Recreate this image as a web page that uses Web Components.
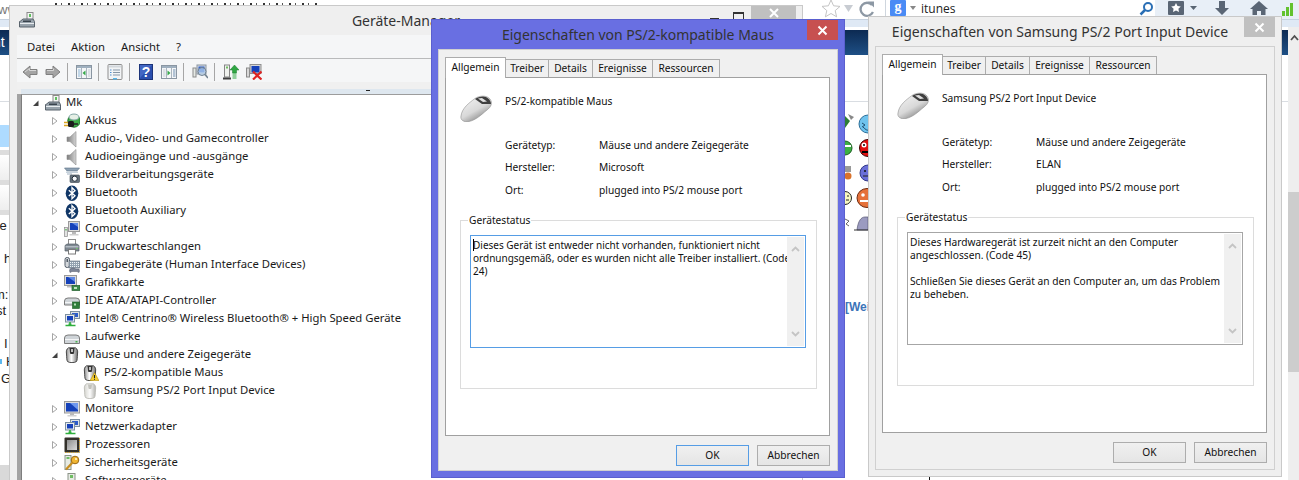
<!DOCTYPE html>
<html>
<head>
<meta charset="utf-8">
<title>Geräte-Manager</title>
<style>
  html, body { margin: 0; height: 100%; background: #fff; overflow: hidden; }
  body { position: relative; width: 1299px; height: 480px; font-family: "Noto Sans", "Liberation Sans", sans-serif; color: #111; }
</style>
</head>
<body>
<browser-behind></browser-behind>

<device-manager>
  <tree-row level="0" state="open" icon="mk">Mk</tree-row>
  <tree-row level="1" state="closed" icon="battery">Akkus</tree-row>
  <tree-row level="1" state="closed" icon="speaker">Audio-, Video- und Gamecontroller</tree-row>
  <tree-row level="1" state="closed" icon="speaker">Audioeingänge und -ausgänge</tree-row>
  <tree-row level="1" state="closed" icon="camera">Bildverarbeitungsgeräte</tree-row>
  <tree-row level="1" state="closed" icon="bt">Bluetooth</tree-row>
  <tree-row level="1" state="closed" icon="bt">Bluetooth Auxiliary</tree-row>
  <tree-row level="1" state="closed" icon="computer">Computer</tree-row>
  <tree-row level="1" state="closed" icon="printer">Druckwarteschlangen</tree-row>
  <tree-row level="1" state="closed" icon="hid">Eingabegeräte (Human Interface Devices)</tree-row>
  <tree-row level="1" state="closed" icon="gpu">Grafikkarte</tree-row>
  <tree-row level="1" state="closed" icon="ide">IDE ATA/ATAPI-Controller</tree-row>
  <tree-row level="1" state="closed" icon="net">Intel® Centrino® Wireless Bluetooth® + High Speed Geräte</tree-row>
  <tree-row level="1" state="closed" icon="drive">Laufwerke</tree-row>
  <tree-row level="1" state="open" icon="mouse">Mäuse und andere Zeigegeräte</tree-row>
  <tree-row level="2" icon="mousewarn">PS/2-kompatible Maus</tree-row>
  <tree-row level="2" icon="mouselight">Samsung PS/2 Port Input Device</tree-row>
  <tree-row level="1" state="closed" icon="monitor">Monitore</tree-row>
  <tree-row level="1" state="closed" icon="net">Netzwerkadapter</tree-row>
  <tree-row level="1" state="closed" icon="cpu">Prozessoren</tree-row>
  <tree-row level="1" state="closed" icon="key">Sicherheitsgeräte</tree-row>
  <tree-row level="1" state="closed" icon="software">Softwaregeräte</tree-row>
</device-manager>

<prop-dialog style="left:431px;top:19px;height:459px;--status-size:10px" active heading="Eigenschaften von PS/2-kompatible Maus"
  device="PS/2-kompatible Maus" maker="Microsoft">Dieses Gerät ist entweder nicht vorhanden, funktioniert nicht<br>ordnungsgemäß, oder es wurden nicht alle Treiber installiert. (Code<br>24)</prop-dialog>

<prop-dialog style="left:868px;top:16px;height:461px;--title-pad:30px" heading="Eigenschaften von Samsung PS/2 Port Input Device"
  device="Samsung PS/2 Port Input Device" maker="ELAN">Dieses Hardwaregerät ist zurzeit nicht an den Computer<br>angeschlossen. (Code 45)<br><br>Schließen Sie dieses Gerät an den Computer an, um das Problem<br>zu beheben.</prop-dialog>

<script>
  const UI_FONT = '"Noto Sans", "Liberation Sans", sans-serif';

  const ICONS = {
    mk: `<rect x="8" y=".5" width="6" height="8" fill="#f4f4f4" stroke="#8a8a8a"/><rect x="10" y="2" width="2" height="3" fill="#5fbf5f"/><path d="M1 9.5 4 7h10l1.500 2.500V15H.5V9.500z" fill="#98a3ac" stroke="#59636c"/><rect x="1" y="11" width="14" height="1" fill="#e8ecef"/><rect x="4" y="8.500" width="8" height="1.500" fill="#39434c"/>`,
    battery: `<circle cx="10" cy="8" r="6.200" fill="#3fae49" stroke="#1f6f2a"/><ellipse cx="10" cy="4" rx="5" ry="3" fill="#e6efe6" stroke="#8aa"/><rect x="4" y="8" width="6" height="6" rx="1.500" fill="#1d1d1d"/><path d="M0 9.500h4M0 12.500h4" stroke="#d9a520" stroke-width="1.300"/><path d="M10 11h4" stroke="#222" stroke-width="1.500"/>`,
    speaker: `<defs><linearGradient id="g"><stop offset="0" stop-color="#7d7d7d"/><stop offset="1" stop-color="#d4d4d4"/></linearGradient></defs><path d="M3 6h3l6-5.500V16L6 10.500H3z" fill="url(#g)" stroke="#8f8f8f" stroke-width=".6"/>`,
    camera: `<path d="M.5 1h15L13 4H3z" fill="#8ea2b4" stroke="#5c7084" stroke-width=".6"/><rect x="2" y="4.500" width="12" height="1.500" fill="#c6d2dc"/><rect x="3" y="6.500" width="5" height="1" fill="#9fb0bf"/><rect x="6" y="8" width="9.500" height="7.500" rx="1" fill="#66727e" stroke="#39434c" stroke-width=".6"/><circle cx="10.700" cy="11.700" r="2.600" fill="#f4f7fa" stroke="#222c36"/>`,
    bt: `<ellipse cx="8" cy="8.200" rx="6.300" ry="7.800" fill="#113767"/><path d="M4.800 5.300 11 10.800 8 13.800V2.600l3 3-6.200 5.500" fill="none" stroke="#fff" stroke-width="1.300"/>`,
    computer: `<rect x=".5" y="6.500" width="3" height="9" fill="#e2e2e2" stroke="#8a8a8a" stroke-width=".7"/><rect x="1.300" y="8" width="1.400" height="1.500" fill="#57b957"/><rect x="4.500" y=".5" width="11" height="10" fill="#dcdcdc" stroke="#9a9a9a"/><rect x="6" y="2" width="8" height="7" fill="#1541b9"/><path d="M8 2h6v4z" fill="#5e88e4"/><rect x="8" y="11" width="4" height="2" fill="#b9b9b9"/><rect x="5.500" y="13" width="9" height="1.500" fill="#cfcfcf"/>`,
    printer: `<rect x="4.500" y=".5" width="7" height="5" fill="#fff" stroke="#8b8b8b"/><path d="M1 6.500 3 5h10l2 1.500V12H1z" fill="#7e8891" stroke="#59636c" stroke-width=".7"/><rect x="1.500" y="7" width="13" height="1.500" fill="#b4bcc4"/><rect x="4.500" y="10.500" width="7" height="4.500" fill="#fff" stroke="#7a7a7a"/><rect x="12" y="9" width="1.500" height="1" fill="#6fcf5f"/>`,
    hid: `<rect x="1" y=".5" width="4.500" height="10" rx="2" fill="#d4d8dc" stroke="#535d68"/><rect x="2.500" y="2" width="1.500" height="3" fill="#535d68"/><rect x="5" y="4" width="11" height="7" fill="#93a2b0" stroke="#65717d" stroke-width=".6"/><path d="M6 5.500h9M6 7.500h9M6 9.500h9" stroke="#eef2f5" stroke-dasharray="1 1"/><path d="M6 12q3-2 6 0l3 0q1 2 0 3.500l-2-1H8l-2 1q-1-2 0-3.500z" fill="#7d8596" stroke="#525a6a" stroke-width=".5"/>`,
    gpu: `<rect x=".5" y=".5" width="12" height="10" fill="#dcdcdc" stroke="#9a9a9a"/><rect x="2" y="2" width="9" height="7" fill="#1541b9"/><path d="M4 2h7v5z" fill="#5e88e4"/><rect x="3" y="11" width="7" height="1.500" fill="#bdbdbd"/><rect x="8" y="10.500" width="8" height="5" fill="#3c8b4a" stroke="#1e5c2a" stroke-width=".7"/><rect x="10" y="12" width="3" height="2" fill="#bfe3c0"/>`,
    ide: `<path d="M.5 8q0-3 3.500-3h8q3.500 0 3.500 3v4H.5z" fill="#cfd4d8" stroke="#7b7b7b"/><rect x="1" y="9" width="14" height="1" fill="#f4f5f6"/><rect x="8.500" y="9" width="7" height="6.500" fill="#2f7d3a" stroke="#1c5a26" stroke-width=".6"/><rect x="10" y="10.500" width="2" height="2" fill="#b7e0b9"/>`,
    net: `<rect x="6.500" y=".5" width="9" height="7" fill="#dde2e6" stroke="#7d8f9f"/><rect x="8" y="2" width="6" height="4" fill="#2b5bc8"/><rect x="1.500" y="3.500" width="9" height="7.500" fill="#e6eaee" stroke="#7d8f9f"/><rect x="3" y="5" width="6" height="4.500" fill="#1541b9"/><path d="M6 11v3M1.500 14.500h10" stroke="#2fae3c" stroke-width="1.600"/><rect x="4.500" y="12.500" width="3" height="1.500" fill="#2fae3c"/>`,
    drive: `<path d="M.5 9q0-3 3.500-3h8q3.500 0 3.500 3v5.500H.5z" fill="#cfd4d8" stroke="#7b7b7b"/><rect x="1" y="10" width="14" height="1" fill="#f5f6f7"/><rect x="11.500" y="12" width="2" height="1.500" fill="#46b04c"/>`,
    mouse: `<defs><linearGradient id="g"><stop offset="0" stop-color="#8f8f8f"/><stop offset=".45" stop-color="#fff"/><stop offset="1" stop-color="#6f6f6f"/></linearGradient></defs><path d="M4.500.8C2.500 2 2 4 2.500 7 2.800 10 2.500 13 3.500 14.500 5 16 11 16 12.500 14.500 13.500 13 13.200 10 13.500 7 14 4 13.500 2 11.500.8z" fill="url(#g)" stroke="#3a3a3a" stroke-width=".9"/><path d="M5.500 1h5l-.5 5.500q-2 1.200-4 0z" fill="#333"/><rect x="7.200" y="2" width="1.600" height="3" fill="#e4e4e4"/>`,
    mousewarn: `<defs><linearGradient id="g"><stop offset="0" stop-color="#8f8f8f"/><stop offset=".45" stop-color="#fff"/><stop offset="1" stop-color="#6f6f6f"/></linearGradient></defs><path d="M3.500.8C1.500 2 1 4 1.500 7 1.800 10 1.500 13 2.500 14.500 4 16 10 16 11.500 14.500 12.500 13 12.200 10 12.500 7 13 4 12.500 2 10.500.8z" fill="url(#g)" stroke="#3a3a3a" stroke-width=".9"/><path d="M4.500 1h5L9 6.500q-2 1.200-4 0z" fill="#333"/><rect x="6.200" y="2" width="1.600" height="3" fill="#e4e4e4"/><path d="M11.500 7.500 16 15.800H7z" fill="#f7cf2e" stroke="#a8891a" stroke-width=".6"/><path d="M11.500 10v3M11.500 13.800v1" stroke="#222" stroke-width="1.100"/>`,
    mouselight: `<defs><linearGradient id="g"><stop offset="0" stop-color="#d6d6d0"/><stop offset=".5" stop-color="#fbfbfb"/><stop offset="1" stop-color="#b2b2ae"/></linearGradient></defs><path d="M3.500.8C1.500 2 1 4 1.500 7 1.800 10 1.500 13 2.500 14.500 4 16 10 16 11.500 14.500 12.500 13 12.200 10 12.500 7 13 4 12.500 2 10.500.8z" fill="url(#g)" stroke="#b5b5ae" stroke-width=".8"/><path d="M5 1.500h4l-.5 4q-1.500 1-3 0z" fill="#c2c2bc"/>`,
    monitor: `<rect x=".5" y=".5" width="15" height="11.500" fill="#dcdcdc" stroke="#9a9a9a"/><rect x="2" y="2" width="12" height="8.500" fill="#1541b9"/><path d="M6 2h8v7z" fill="#6f98ee"/><rect x="6" y="12" width="4" height="2" fill="#b9b9b9"/><rect x="3.500" y="14" width="9" height="1.500" fill="#d2d2d2"/>`,
    cpu: `<rect x=".5" y=".5" width="15" height="15" rx="1" fill="#33302a"/><path d="M1 15.500h14.500V1" fill="none" stroke="#d3a12c" stroke-dasharray="1 1"/><defs><linearGradient id="g" x1="0" y1="0" x2="1" y2="1"><stop offset="0" stop-color="#8d8d8d"/><stop offset="1" stop-color="#dcdcdc"/></linearGradient></defs><rect x="3" y="3" width="10" height="10" fill="url(#g)"/>`,
    key: `<rect x="1" y=".5" width="6" height="14" fill="#e7ebe4" stroke="#8c9488"/><rect x="2.500" y="2" width="3" height="2" fill="#6fbd63"/><circle cx="11" cy="5" r="3.800" fill="#f0b531" stroke="#96681a"/><circle cx="12" cy="4" r="1.100" fill="#fff4cf"/><path d="M8.500 7.500 2 14.500" stroke="#c78e22" stroke-width="2.200"/>`,
    software: `<rect x="4" y=".5" width="7" height="14" fill="#e7ebe4" stroke="#8c9488"/><rect x="6" y="2" width="3" height="3" fill="#6fbd63"/>`,
    back: `<path d="M1 8 8 2v3.500h7v5H8V14z" fill="#a4a4a4" stroke="#7f7f7f"/><path d="M3 8 7.500 4.500v2h6.500" fill="none" stroke="#d6d6d6"/>`,
    forward: `<path d="M15 8 8 2v3.500H1v5h7V14z" fill="#a4a4a4" stroke="#7f7f7f"/><path d="M2 6.500h6.500v-2" fill="none" stroke="#d6d6d6"/>`,
    tree: `<rect x=".5" y="1.500" width="15" height="13" fill="#f4f6f8" stroke="#8a96a2"/><rect x="1" y="2" width="14" height="2" fill="#9fb0bf"/><path d="M5.500 4v10M10.500 4v10" stroke="#aab4be"/><path d="M2 6h2.500M2 8h2.500M2 10h2.500M2 12h2.500" stroke="#8fb8d8"/><path d="M9.500 6.500v5L6.500 9z" fill="#35a84a"/><path d="M12 6h2.500M12 8h2.500M12 10h2.500M12 12h2.500" stroke="#c3ccd4"/>`,
    props: `<rect x="1" y=".5" width="14" height="15" rx="1" fill="#f2f4f6" stroke="#8e8e8e"/><rect x="2" y="1.500" width="12" height="2" fill="#d2d7dc"/><path d="M6 6h7M6 8.500h7M6 11h7" stroke="#8696a6"/><path d="M3 6h1.500M3 8.500h1.500M3 11h1.500" stroke="#4f8fcf"/><rect x="6" y="14" width="4" height="1.500" fill="#55b4e8"/>`,
    help: `<rect x="1.500" y=".5" width="13" height="15" fill="#2a4fae" stroke="#1c347a"/><path d="M2 1h12L2 14z" fill="#5b7fd8" opacity=".5"/><text x="8" y="13" text-anchor="middle" font-family="Liberation Sans" font-weight="700" font-size="14" fill="#fff">?</text>`,
    action: `<rect x=".5" y="1.500" width="15" height="13" fill="#f4f6f8" stroke="#8a96a2"/><rect x="1" y="2" width="14" height="2" fill="#9fb0bf"/><path d="M5.500 4v10M10.500 4v10" stroke="#aab4be"/><path d="M6.500 6.500v5L9.500 9z" fill="#35a84a"/><path d="M2 6h2.500M2 8h2.500M2 10h2.500M2 12h2.500" stroke="#c3ccd4"/><path d="M12 6h2.500M12 8h2.500M12 10h2.500M12 12h2.500" stroke="#6e8fb0"/>`,
    scan: `<rect x="1" y="4" width="3" height="9" fill="#e4e8e4" stroke="#8a8a8a"/><rect x="5" y="1" width="9" height="9" fill="#d6dde4" stroke="#8a94a0"/><rect x="6.500" y="2.500" width="6" height="6" fill="#2a5cc8"/><circle cx="10" cy="7.500" r="4" fill="#bcd6ee" fill-opacity=".7" stroke="#6f8192"/><path d="M13 10.500 16 14" stroke="#70808e" stroke-width="1.600"/>`,
    update: `<rect x="1.500" y="1" width="5" height="12" fill="#f0f2ee" stroke="#858585"/><rect x="3" y="2.500" width="2" height="2" fill="#6fbd63"/><rect x="0" y="13.500" width="8" height="2" fill="#3f3f3f"/><path d="M11.500 1 16 6h-2.500v3h-4V6H7z" fill="#2fa743" stroke="#1d7a2e" stroke-width=".5"/><path d="M9.500 10h4M9.500 12h4M9.500 14h4" stroke="#2fa743" stroke-width="1.200"/>`,
    disable: `<rect x=".5" y="4" width="3" height="9" fill="#d8d8d8" stroke="#8a8a8a"/><rect x="4" y=".5" width="11" height="9" fill="#d6d6d6" stroke="#8f8f8f"/><rect x="5.500" y="2" width="8" height="6.500" fill="#1541b9"/><path d="M7 7.500 15.500 15.500M15.500 7.500 7 15.500" stroke="#de2323" stroke-width="2.200"/>`
  };

  class DevIcon extends HTMLElement {
    connectedCallback() {
      const size = this.getAttribute('size') || 16;
      this.attachShadow({ mode: 'open' }).innerHTML = `
        <style>:host { display: block; width: ${size}px; height: ${size}px; flex: none; } svg { display: block; }</style>
        <svg width="${size}" height="${size}" viewBox="0 0 16 16">${ICONS[this.getAttribute('name')] || ''}</svg>`;
    }
  }
  customElements.define('dev-icon', DevIcon);

  // everything of the browser that peeks out behind the three windows
  class BrowserBehind extends HTMLElement {
    constructor() {
      super();
      this.attachShadow({ mode: 'open' }).innerHTML = `
      <style>
        :host { position: absolute; inset: 0; display: flex; flex-direction: column; background: #fff; overflow: hidden; }
        .tools { height: 19px; display: flex; background: #fff; flex: none; }
        .strip { height: 7px; flex: none; background: #dfe9f5; border-top: 1px solid #c6d2e0; }
        .navy { height: 25px; flex: none; margin-top: 3px; background: linear-gradient(#0c2a52, #1e4f85); }
        .rule { height: 1px; flex: none; margin-top: 46px; background: #d9dde2; }
        .bit { position: absolute; }
        .txt { position: absolute; font: 13px/15px "Liberation Sans", sans-serif; color: #222; white-space: nowrap; }
        .scroll { position: absolute; left: 1288px; top: 27px; width: 11px; bottom: 0; background: #eee; }
        .thumb { position: absolute; left: 0; right: 0; top: 165px; height: 180px; background: #cdcdcd; }
        .search { position: absolute; left: 885px; top: 0; width: 269px; height: 16px; border-left: 1px solid #cfd6de; display: flex; align-items: center; gap: 3px; padding-left: 4px; font: 12px "Open Sans", sans-serif; color: #222; }
        .right { position: absolute; left: 1155px; top: 0; width: 144px; height: 19px; background: #e8eff7; }
        .g { width: 16px; height: 16px; background: #4a8bf5; border-radius: 1px; color: #fff; font: bold 14px/14px "Liberation Serif", serif; text-align: center; }
      </style>
      <div class="tools"></div>
      <div class="strip"></div>
      <div class="navy"></div>
      <div class="rule"></div>

      <span class="txt" style="left:-2px;top:2px;color:#777">ww</span>
      <span class="txt" style="left:-7px;top:35px;color:#fff;font-size:14px">nt</span>
      <div class="bit" style="left:55px;top:3px;width:262px;height:2px;background:repeating-linear-gradient(90deg,#333 0 2px,transparent 2px 6px,#555 6px 7px,transparent 7px 13px)"></div>

      <div class="bit" style="left:0;top:125px;width:11px;height:22px;background:#aedbff;border-radius:0 3px 3px 0"></div>
      <div class="bit" style="left:0;top:150px;width:9px;height:65px;background:linear-gradient(#ddd 0 5px,#fff 5px,#eee 30px,#ddd 30px 35px,#fff 35px,#eee 60px,#ddd 60px)"></div>
      <span class="txt" style="left:-4px;top:218px">te</span>
      <span class="txt" style="left:4px;top:251px">h</span>
      <span class="txt" style="left:-6px;top:287px">m:</span>
      <span class="txt" style="left:-4px;top:303px">st</span>
      <span class="txt" style="left:4px;top:336px">I</span>
      <span class="txt" style="left:6px;top:354px">H</span>
      <div class="bit" style="left:0;top:359px;width:2px;height:5px;background:#5cb8ee"></div>
      <span class="txt" style="left:1px;top:371px">G</span>
      <div class="bit" style="left:0;top:465px;width:9px;height:15px;background:#d9d9d9"></div>

      <svg class="bit" style="left:822px;top:0" width="52" height="20" viewBox="0 0 52 20">
        <path d="M8 0l2.600 5.800 6.400.6-4.800 4.200 1.400 6.200L8 13.500l-5.600 3.300 1.400-6.200L-1 6.400l6.400-.6z" transform="translate(1 0)" fill="#fff" stroke="#c4c4c4"/>
        <path d="M22 5h9l-4.500 7z" fill="#c8ccd2"/>
        <path d="M50 5a6.500 6.500 0 1 0 1 7" fill="none" stroke="#8d98a4" stroke-width="2.300"/><path d="M46 1.500h6v6z" fill="#8d98a4"/>
      </svg>

      <svg class="bit" style="left:845px;top:112px" width="23" height="122" viewBox="0 0 23 122">
        <path d="M0 4 5 9 0 16z" fill="#2d7d33"/><path d="M3 2 9 5 6 8z" fill="#888"/>
        <circle cx="23" cy="12" r="9" fill="#6fc3ee" stroke="#2c6f99"/><path d="M17 11l3 2-3 2" fill="none" stroke="#204e6e"/><path d="M18 15q4 4 5 3" fill="none" stroke="#204e6e"/>
        <circle cx="0" cy="36" r="7" fill="#3cb043" stroke="#1d5d22"/><path d="M0 34h6" stroke="#fff" stroke-width="2"/>
        <circle cx="23" cy="36" r="8.500" fill="#e01010" stroke="#3a0000"/><circle cx="19" cy="33" r="2.500" fill="#fff"/><circle cx="19" cy="33" r="1" fill="#000"/><path d="M17 40h6" stroke="#000" stroke-width="2"/>
        <rect x="0" y="54" width="6" height="6" fill="#999"/><circle cx="3" cy="64" r="3.500" fill="#d9722c"/>
        <circle cx="23" cy="61" r="8" fill="#6a6fd8" stroke="#333a88"/><circle cx="20" cy="59" r="1" fill="#111"/><path d="M18 64h5" stroke="#222"/>
        <circle cx="0" cy="86" r="6.500" fill="#f8f8c0" stroke="#222"/><path d="M2 84h2M1 88h3" stroke="#222"/>
        <ellipse cx="22" cy="86" rx="10" ry="9.500" fill="#e5713a" stroke="#6d2a0f"/><circle cx="18" cy="83" r="1.800" fill="#fff"/><path d="M15 89h8" stroke="#fff" stroke-width="2"/>
        <path d="M0 107l4 2-3 3 3 2" fill="none" stroke="#666"/>
        <path d="M12 118c1-9 4-13 8-13h3v13z" fill="#9b9bc0" stroke="#565672" stroke-width=".7"/><path d="M9 118h14" stroke="#333"/>
      </svg>
      <span class="txt" style="left:845px;top:300px;color:#3d74b8;font-weight:700;font-size:12px">[Wei</span>
      <div class="bit" style="left:929px;top:477px;width:1px;height:3px;background:#111"></div>

      <div class="search"><div class="g">g</div><svg width="9" height="8" viewBox="0 0 9 8"><path d="M1 2h6L4 6z" fill="#888"/></svg><span>itunes</span>
        <svg style="position:absolute;right:5px;top:1px" width="15" height="15" viewBox="0 0 15 15"><circle cx="9" cy="6" r="4" fill="#fff" stroke="#2a6fb5" stroke-width="2"/><path d="M6 9 1.500 13.500" stroke="#2a6fb5" stroke-width="2.500"/></svg>
      </div>
      <div class="right">
        <svg width="144" height="19" viewBox="0 0 144 19">
          <rect x="13" y="1" width="16" height="14" rx="1" fill="#5a6675"/><path d="M21 3l1.500 3 3.300.4-2.400 2.300.6 3.300-3-1.600-3 1.600.6-3.300-2.400-2.300 3.300-.4z" fill="#fff"/>
          <path d="M35 6h7l-3.500 4z" fill="#596573"/>
          <path d="M64 1h6v7h4l-7 7-7-7h4z" fill="#5a6675"/>
          <path d="M104 1l9 8h-2.500v6H106v-4h-4v4h-4.500V9H95z" fill="#5a6675"/>
          <path d="M127 11h3v5h-3zM131 7h3v9h-3zM135 3h3v13h-3z" fill="#63c22f"/>
        </svg>
      </div>
      <div class="scroll"><div class="thumb"></div>
        <svg style="position:absolute;left:2px;top:7px" width="9" height="7" viewBox="0 0 9 7"><path d="M1 6 4.500 2 8 6" fill="none" stroke="#505050" stroke-width="1.800"/></svg>
      </div>`;
    }
  }
  customElements.define('browser-behind', BrowserBehind);

  class TreeRow extends HTMLElement {
    connectedCallback() {
      const level = +this.getAttribute('level');
      const state = this.getAttribute('state');
      const arrow = state === 'open'
        ? '<path d="M7.500 2.500V8H2z" fill="#404040"/>'
        : state === 'closed' ? '<path d="M2.500 1.500 7 5 2.500 8.500z" fill="#fff" stroke="#a6a6a6"/>' : '';
      this.attachShadow({ mode: 'open' }).innerHTML = `
        <style>
          :host { display: flex; align-items: center; height: 18px; padding-left: ${9 + 19 * level}px; font: 11.300px/18px ${UI_FONT}; color: #1a1a1a; white-space: nowrap; }
          svg { flex: none; width: 10px; height: 10px; margin-right: 4px; }
          span { margin: -2px 0 0 5px; }
        </style>
        <svg viewBox="0 0 10 10">${arrow}</svg>
        <dev-icon name="${this.getAttribute('icon')}"></dev-icon>
        <span><slot></slot></span>`;
    }
  }
  customElements.define('tree-row', TreeRow);

  class DeviceManager extends HTMLElement {
    constructor() {
      super();
      const tools = [['back'], ['forward'], 0, ['tree'], 0, ['props'], 0, ['help'], ['action'], 0, ['scan'], 0, ['update'], ['disable']];
      const toolbar = tools.map(t => t
        ? `<span class="tool"><dev-icon name="${t[0]}"></dev-icon></span>`
        : '<i class="sep"></i>').join('');
      this.attachShadow({ mode: 'open' }).innerHTML = `
      <style>
        :host { position: absolute; left: 9px; top: 5px; width: 794px; height: 480px; box-sizing: border-box; display: flex; flex-direction: column; background: #efefef; border: 1px solid #c9c9c9; font-family: ${UI_FONT}; overflow: hidden; }
        .title { height: 29px; flex: none; position: relative; display: flex; align-items: center; justify-content: center; font-size: 14px; color: #333; }
        .app { position: absolute; left: 9px; top: 6px; }
        .caps { position: absolute; right: 6px; top: -1px; display: flex; align-items: flex-start; }
        .min { width: 9px; height: 2px; background: #333; margin: 13px 14px 0 0; }
        .max { width: 9px; height: 9px; border: 1px solid #333; border-top-width: 2px; margin: 7px 7px 0 0; }
        .close { width: 45px; height: 15px; background: #c0c0c0; position: relative; }
        .close svg { position: absolute; left: 18px; top: 3px; }
        .body { flex: 1; margin-left: 7px; display: flex; flex-direction: column; min-height: 0; }
        .menu { height: 23px; flex: none; background: #f5f6f7; border-bottom: 1px solid #b9babb; display: flex; align-items: center; padding-left: 10px; gap: 16px; font-size: 11.300px; color: #1a1a1a; }
        .toolbar { height: 23px; flex: none; box-sizing: border-box; padding: 2px 0 0 1px; background: #f5f6f7; display: flex; align-items: center; }
        .tool { width: 23px; height: 16px; display: flex; justify-content: center; }
        .sep { width: 8px; height: 18px; flex: none; box-sizing: border-box; border-left: 1px solid #a6a6a6; margin-left: 3px; margin-right: -3px; }
        .gap { height: 7px; flex: none; background: #f0f0f0; }
        .strip { height: 5px; flex: none; margin-left: 4px; background: #dee7ef; position: relative; }
        .strip::after { content: ""; position: absolute; left: 345px; top: 1px; width: 4px; height: 1px; background: #222; }
        .tree-wrap { flex: 1; display: flex; min-height: 0; background: #a3a3a3; padding-left: 4px; }
        .tree { flex: 1; background: #fff; border-top: 1px solid #9c9c9c; border-left: 1px solid #7e7e7e; overflow: hidden; }
        .rows { margin-top: -1px; }
      </style>
      <div class="title">
        <dev-icon class="app" name="mk"></dev-icon>
        Geräte-Manager
        <div class="caps"><i class="min"></i><i class="max"></i><div class="close"><svg width="10" height="10" viewBox="0 0 10 10"><path d="M1 1l8 8M9 1 1 9" stroke="#fff" stroke-width="2"/></svg></div></div>
      </div>
      <div class="body">
        <div class="menu"><span>Datei</span><span>Aktion</span><span>Ansicht</span><span>?</span></div>
        <div class="toolbar">${toolbar}</div>
        <div class="gap"></div>
        <div class="strip"></div>
        <div class="tree-wrap"><div class="tree"><div class="rows"><slot></slot></div></div></div>
      </div>`;
    }
  }
  customElements.define('device-manager', DeviceManager);

  class PropDialog extends HTMLElement {
    connectedCallback() {
      const active = this.hasAttribute('active');
      const mouse = `<svg width="33" height="27" viewBox="0 0 33 27">
        <defs><linearGradient id="m" x1=".1" y1=".1" x2=".7" y2="1"><stop offset="0" stop-color="#f2f2f2"/><stop offset=".55" stop-color="#d8d8d8"/><stop offset="1" stop-color="#7c7c7c"/></linearGradient></defs>
        <path d="M1 21C2 13 9 8 15 3.500 19 .5 27 0 30 4c3 4 1 8-3 11-6 5-11 10-18 11.500C4 27.500 0 25 1 21z" fill="url(#m)" stroke="#8e8e8e" stroke-width=".6"/>
        <path d="M15 4 22 9 31 9C31 5 27 1.500 23 1.500 20 1.500 17 2.500 15 4z" fill="#3f3f3f"/>
        <path d="M18 3.500 23 7 27 6.500 22 3z" fill="#e0e0e0"/>
      </svg>`;
      this.attachShadow({ mode: 'open' }).innerHTML = `
      <style>
        :host { position: absolute; width: 414px; height: 460px; box-sizing: border-box; display: flex; flex-direction: column; padding: 0 6px 6px; border: 1px solid ${active ? '#5a5fcf' : '#c9c9c9'}; background: ${active ? '#696fe2' : '#efefef'}; font: 10.200px/13px ${UI_FONT}; color: #111; }
        .title { height: 29px; flex: none; box-sizing: border-box; padding-right: var(--title-pad, 0); display: flex; align-items: center; justify-content: center; font-size: 14px; color: #333; position: relative; }
        .close { position: absolute; right: 0; top: 0; width: 31px; height: 20px; background: ${active ? '#c75050' : '#c0c0c0'}; display: flex; align-items: center; justify-content: center; }
        .panel { flex: 1; background: #f0f0f0; border: 1px solid #d0d0d0; padding: 7px 6px 0; display: flex; flex-direction: column; }
        .tabs { display: flex; align-items: flex-end; height: 20px; flex: none; }
        .tab { height: 18px; box-sizing: border-box; border: 1px solid #acacac; border-bottom: 0; margin-left: -1px; background: #f0f0f0; display: flex; align-items: center; justify-content: center; }
        .tab.on { height: 21px; margin: 0 0 -1px 0; background: #fff; z-index: 1; padding-bottom: 1px; }
        .page { width: 385px; height: 359px; box-sizing: border-box; background: #fff; border: 1px solid #a0a0a0; padding: 17px 11px 0 14px; flex: none; }
        .head { display: flex; height: 27px; gap: 12px; }
        .rows { margin: 12px 0 0 45px; }
        .row { display: flex; height: 22.500px; align-items: center; }
        .row b { font-weight: 400; width: 94px; }
        .group { position: relative; width: 357px; height: 169px; box-sizing: border-box; margin-top: 18.500px; border: 1px solid #dcdcdc; padding: 14px 0 0 9px; }
        .legend { position: absolute; left: 7px; top: -7px; background: #fff; padding: 0 1px; }
        .box { width: 336px; height: 113px; box-sizing: border-box; border: 1px solid ${active ? '#569de5' : '#a6a6a6'}; display: flex; position: relative; }
        .text { flex: 1; padding: 3px 2px 0; white-space: nowrap; overflow: hidden; font-size: var(--status-size, 10.200px); }
        .bar { width: 17px; background: #f0f0f0; margin: 1px; margin-left: 0; display: flex; flex-direction: column; justify-content: space-between; align-items: center; padding: 9px 0; box-sizing: border-box; }
        .caret { position: absolute; left: 2px; top: 3px; width: 1px; height: 12px; background: #000; }
        .buttons { display: flex; justify-content: flex-end; gap: 8px; margin-top: 9px; padding-right: 1px; }
        .btn { width: 73px; height: 21px; box-sizing: border-box; border: 1px solid #adadad; background: linear-gradient(#f0f0f0, #e5e5e5); display: flex; align-items: center; justify-content: center; }
        .btn.def { ${active ? 'border-color: #569de5;' : ''} }
      </style>
      <div class="title">${this.getAttribute('heading')}
        <div class="close"><svg width="11" height="11" viewBox="0 0 11 11"><path d="M1.500 1.500l8 8M9.500 1.500l-8 8" stroke="#fff" stroke-width="2"/></svg></div>
      </div>
      <div class="panel">
        <div class="tabs">
          <div class="tab on" style="width:61px">Allgemein</div>
          <div class="tab" style="width:44px">Treiber</div>
          <div class="tab" style="width:45px">Details</div>
          <div class="tab" style="width:61px">Ereignisse</div>
          <div class="tab" style="width:68px">Ressourcen</div>
        </div>
        <div class="page">
          <div class="head">${mouse}<span>${this.getAttribute('device')}</span></div>
          <div class="rows">
            <div class="row"><b>Gerätetyp:</b><span>Mäuse und andere Zeigegeräte</span></div>
            <div class="row"><b>Hersteller:</b><span>${this.getAttribute('maker')}</span></div>
            <div class="row"><b>Ort:</b><span>plugged into PS/2 mouse port</span></div>
          </div>
          <div class="group">
            <span class="legend">Gerätestatus</span>
            <div class="box">
              ${active ? '<i class="caret"></i>' : ''}
              <div class="text"><slot></slot></div>
              <div class="bar">
                <svg width="9" height="6" viewBox="0 0 9 6"><path d="M1 5 4.500 1.500 8 5" fill="none" stroke="#c4c4c4" stroke-width="1.800"/></svg>
                <svg width="9" height="6" viewBox="0 0 9 6"><path d="M1 1 4.500 4.500 8 1" fill="none" stroke="#c4c4c4" stroke-width="1.800"/></svg>
              </div>
            </div>
          </div>
        </div>
        <div class="buttons"><div class="btn def">OK</div><div class="btn">Abbrechen</div></div>
      </div>`;
    }
  }
  customElements.define('prop-dialog', PropDialog);
</script>
</body>
</html>
